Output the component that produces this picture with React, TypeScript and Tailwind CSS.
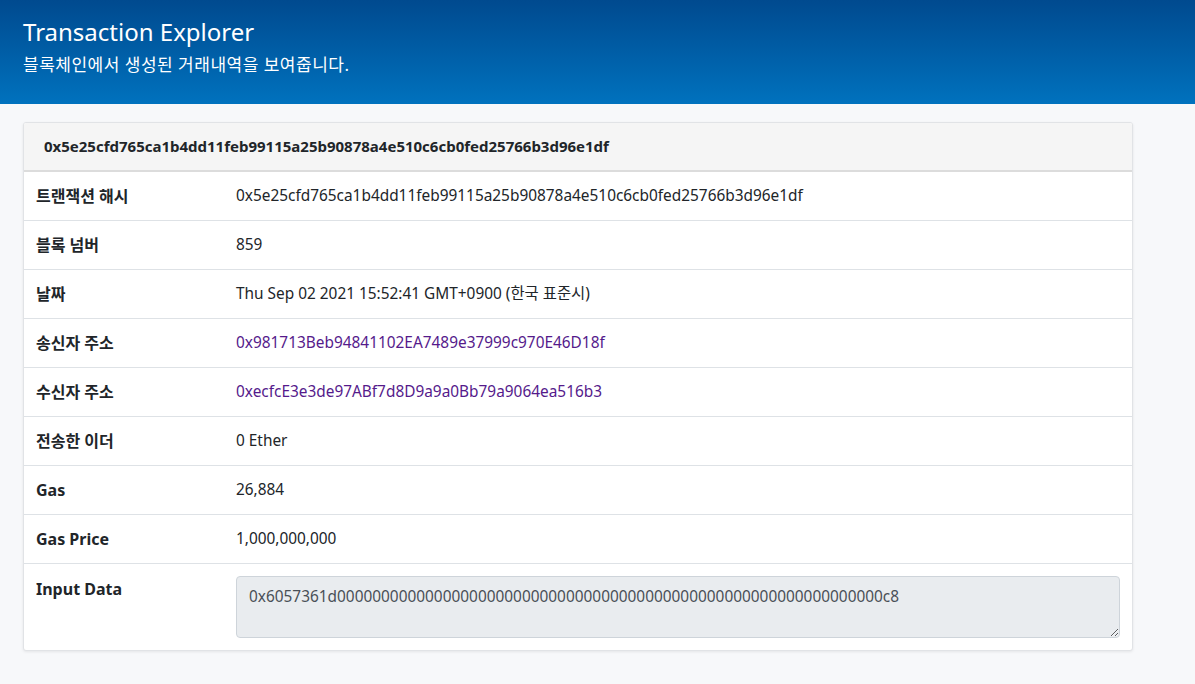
import React from "react";

const rows: { label: string; value: string; link?: boolean }[] = [
  { label: "트랜잭션 해시", value: "0x5e25cfd765ca1b4dd11feb99115a25b90878a4e510c6cb0fed25766b3d96e1df" },
  { label: "블록 넘버", value: "859" },
  { label: "날짜", value: "Thu Sep 02 2021 15:52:41 GMT+0900 (한국 표준시)" },
  { label: "송신자 주소", value: "0x981713Beb94841102EA7489e37999c970E46D18f", link: true },
  { label: "수신자 주소", value: "0xecfcE3e3de97ABf7d8D9a9a0Bb79a9064ea516b3", link: true },
  { label: "전송한 이더", value: "0 Ether" },
  { label: "Gas", value: "26,884" },
  { label: "Gas Price", value: "1,000,000,000" },
];

export default function App() {
  return (
    <div
      className="min-h-[684px] bg-[#f7f8fa] text-[#212529]"
      style={{ fontFamily: '"Noto Sans", "Noto Sans CJK KR", sans-serif' }}
    >
      <header className="h-[104px] bg-gradient-to-b from-[#004a8f] to-[#0072be] px-[23px] pt-[16px] text-white">
        <h1 className="text-[24px] leading-[32px]">Transaction Explorer</h1>
        <p className="mt-[5px] text-[17px] leading-[24px] tracking-[0.5px]">블록체인에서 생성된 거래내역을 보여줍니다.</p>
      </header>

      <div className="pl-[23px] pt-[18px]">
        <div className="w-[1110px] overflow-hidden rounded-[3px] border border-[#e1e3e6] bg-white shadow-[0_1px_3px_rgba(0,0,0,0.08)]">
          <div className="flex h-[49px] items-center border-b-2 border-[#dcdcdc] bg-[#f5f5f5] px-[20px] text-[15px] font-bold">
            0x5e25cfd765ca1b4dd11feb99115a25b90878a4e510c6cb0fed25766b3d96e1df
          </div>
          {rows.map((r) => (
            <div key={r.label} className="flex h-[49px] items-center border-b border-[#dee2e6] text-[15.4px]">
              <div className="w-[212px] pl-[12px] text-[16px] font-bold">{r.label}</div>
              <div className={r.link ? "text-[#551a8b]" : ""}>{r.value}</div>
            </div>
          ))}
          <div className="flex h-[86px] pt-[12px] text-[16px]">
            <div className="w-[212px] pl-[12px] pt-[1px] font-bold">Input Data</div>
            <textarea
              readOnly
              value="0x6057361d00000000000000000000000000000000000000000000000000000000000000c8"
              className="h-[62px] w-[884px] rounded-[4px] border border-[#ced4da] bg-[#e9ecef] px-[12px] py-[8px] text-[15.4px] text-[#495057] outline-none"
            />
          </div>
        </div>
      </div>
    </div>
  );
}
